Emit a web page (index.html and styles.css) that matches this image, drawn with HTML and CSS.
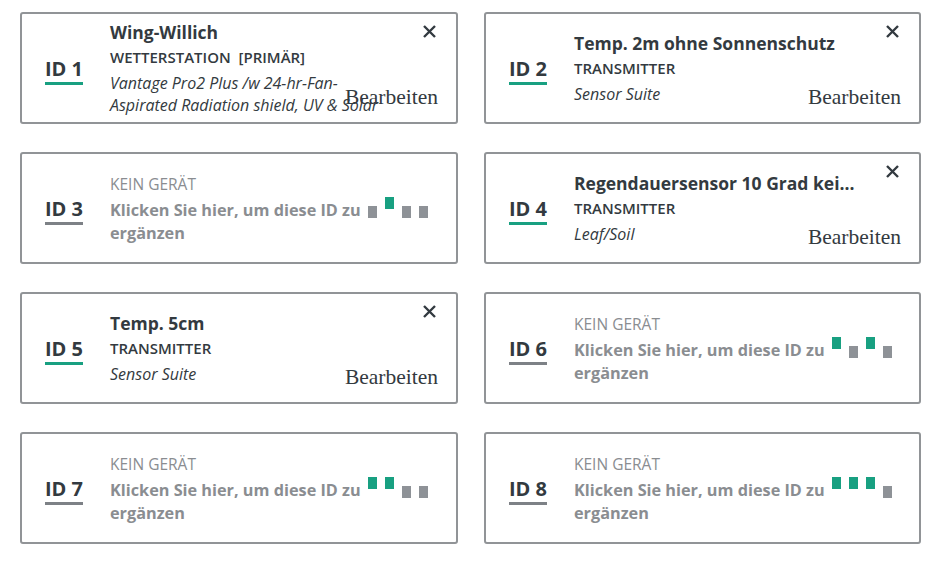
FILE: index.html
```html
<!DOCTYPE html>
<html lang="de">
<head>
<meta charset="utf-8">
<link rel="stylesheet" href="styles.css">
</head>
<body>
<div class="grid">
  <div class="card">
    <div class="id"><span class="id-label">ID 1</span></div>
    <div class="info">
      <div class="title">Wing-Willich</div>
      <div class="kind">WETTERSTATION&nbsp;&nbsp;[PRIMÄR]</div>
      <div class="desc">Vantage Pro2 Plus /w 24-hr-Fan-Aspirated Radiation shield, UV &amp; Solar</div>
    </div>
    <svg class="close" viewBox="0 0 15 13" width="15" height="13"><path d="M2 1 L13 12 M13 1 L2 12" stroke="#333a40" stroke-width="2.4" fill="none"/></svg>
    <span class="edit">Bearbeiten</span>
  </div>

  <div class="card">
    <div class="id"><span class="id-label">ID 2</span></div>
    <div class="info">
      <div class="title">Temp. 2m ohne Sonnenschutz</div>
      <div class="kind">TRANSMITTER</div>
      <div class="desc">Sensor Suite</div>
    </div>
    <svg class="close" viewBox="0 0 15 13" width="15" height="13"><path d="M2 1 L13 12 M13 1 L2 12" stroke="#333a40" stroke-width="2.4" fill="none"/></svg>
    <span class="edit">Bearbeiten</span>
  </div>

  <div class="card empty">
    <div class="id"><span class="id-label">ID 3</span></div>
    <div class="info">
      <div class="kind">KEIN GERÄT</div>
      <div class="add-row">
        <div class="add-text">Klicken Sie hier, um diese ID zu ergänzen</div>
        <div class="bars"><span class="bar"></span><span class="bar on"></span><span class="bar"></span><span class="bar"></span></div>
      </div>
    </div>
  </div>

  <div class="card">
    <div class="id"><span class="id-label">ID 4</span></div>
    <div class="info">
      <div class="title">Regendauersensor 10 Grad kei...</div>
      <div class="kind">TRANSMITTER</div>
      <div class="desc">Leaf/Soil</div>
    </div>
    <svg class="close" viewBox="0 0 15 13" width="15" height="13"><path d="M2 1 L13 12 M13 1 L2 12" stroke="#333a40" stroke-width="2.4" fill="none"/></svg>
    <span class="edit">Bearbeiten</span>
  </div>

  <div class="card">
    <div class="id"><span class="id-label">ID 5</span></div>
    <div class="info">
      <div class="title">Temp. 5cm</div>
      <div class="kind">TRANSMITTER</div>
      <div class="desc">Sensor Suite</div>
    </div>
    <svg class="close" viewBox="0 0 15 13" width="15" height="13"><path d="M2 1 L13 12 M13 1 L2 12" stroke="#333a40" stroke-width="2.4" fill="none"/></svg>
    <span class="edit">Bearbeiten</span>
  </div>

  <div class="card empty">
    <div class="id"><span class="id-label">ID 6</span></div>
    <div class="info">
      <div class="kind">KEIN GERÄT</div>
      <div class="add-row">
        <div class="add-text">Klicken Sie hier, um diese ID zu ergänzen</div>
        <div class="bars"><span class="bar on"></span><span class="bar"></span><span class="bar on"></span><span class="bar"></span></div>
      </div>
    </div>
  </div>

  <div class="card empty">
    <div class="id"><span class="id-label">ID 7</span></div>
    <div class="info">
      <div class="kind">KEIN GERÄT</div>
      <div class="add-row">
        <div class="add-text">Klicken Sie hier, um diese ID zu ergänzen</div>
        <div class="bars"><span class="bar on"></span><span class="bar on"></span><span class="bar"></span><span class="bar"></span></div>
      </div>
    </div>
  </div>

  <div class="card empty">
    <div class="id"><span class="id-label">ID 8</span></div>
    <div class="info">
      <div class="kind">KEIN GERÄT</div>
      <div class="add-row">
        <div class="add-text">Klicken Sie hier, um diese ID zu ergänzen</div>
        <div class="bars"><span class="bar on"></span><span class="bar on"></span><span class="bar on"></span><span class="bar"></span></div>
      </div>
    </div>
  </div>
</div>
</body>
</html>
```

FILE: styles.css
```css
html, body {
  margin: 0;
  padding: 0;
  background: #ffffff;
}

body {
  font-family: "Open Sans", "Noto Sans", sans-serif;
  color: #333a40;
}

.grid {
  display: grid;
  grid-template-columns: 438px 437px;
  grid-auto-rows: 112px;
  column-gap: 26px;
  row-gap: 28px;
  padding: 12px 0 0 20px;
}

.card {
  position: relative;
  box-sizing: border-box;
  border: 2px solid #919497;
  border-radius: 3px;
  display: flex;
  align-items: center;
  padding: 0 20px 0 23px;
}

.id {
  width: 65px;
  flex: 0 0 65px;
  margin-top: 5px;
}

.id-label {
  display: inline-block;
  font-size: 20px;
  font-weight: 700;
  line-height: 24px;
  color: #333a40;
  padding-bottom: 1px;
  border-bottom: 3px solid #18a081;
}

.empty .id-label {
  border-bottom-color: #7d8186;
}

.info {
  flex: 1;
  min-width: 0;
}

.title {
  font-size: 17.5px;
  font-weight: 700;
  line-height: 25px;
  white-space: nowrap;
}

.kind {
  font-size: 15px;
  font-weight: 600;
  line-height: 24px;
  text-transform: uppercase;
}

.desc {
  font-size: 16px;
  font-style: italic;
  line-height: 22px;
  margin-top: 3px;
  padding-right: 40px;
}

.empty .kind {
  font-weight: 400;
  color: #8a8d91;
  font-size: 15.5px;
}

.add-row {
  display: flex;
  align-items: flex-start;
  margin-top: 3px;
}

.add-text {
  width: 256px;
  font-size: 16.25px;
  font-weight: 700;
  line-height: 23px;
  color: #8a8d91;
}

.bars {
  display: flex;
  align-items: flex-start;
  gap: 8px;
  margin-left: 2px;
  margin-top: -2px;
}

.bar {
  width: 9px;
  height: 12px;
  margin-top: 9px;
  background: #8e9297;
}

.bar.on {
  margin-top: 0;
  background: #18a081;
}

.close {
  position: absolute;
  top: 11px;
  right: 19px;
}

.edit {
  position: absolute;
  right: 18px;
  bottom: 13px;
  font-family: "Liberation Serif", "Times New Roman", serif;
  font-size: 21.5px;
  line-height: 24px;
  color: #333a40;
}
```
